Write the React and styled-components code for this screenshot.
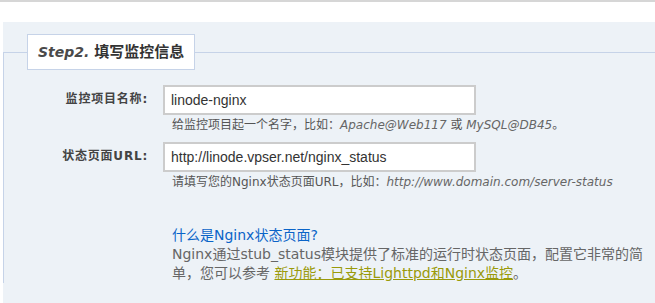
import React from "react";
import styled, { createGlobalStyle } from "styled-components";

const GlobalStyle = createGlobalStyle`
  html, body {
    margin: 0;
    padding: 0;
    background: #fff;
  }
  body {
    font-family: "DejaVu Sans", "Noto Sans CJK SC", sans-serif;
    font-size: 12px;
    color: #555;
  }
`;

const Page = styled.div`
  width: 655px;
  height: 303px;
  overflow: hidden;
  border-top: 2px solid #d6d6d6;
  padding-top: 20px;
  box-sizing: border-box;
`;

const Panel = styled.div`
  margin-left: 3px;
  padding-top: 12px;
  height: 400px;
  background-color: #edf2f7;
`;

const Fieldset = styled.fieldset`
  margin: 0;
  padding: 0 0 0 23px;
  min-width: 0;
  border: 1px solid #c6d3e8;
  border-right: none;
  border-bottom: none;
`;

const Legend = styled.legend`
  height: 36px;
  box-sizing: border-box;
  padding: 0 10px;
  border: 1px solid #c6d3e8;
  background-color: #fff;
  line-height: 34px;
  font-size: 14px;
  font-weight: bold;
  color: #333;
`;

const StepNo = styled.em`
  font-style: italic;
  color: #4a4a4a;
`;

const StepName = styled.span`
  font-size: 15px;
`;

const Form = styled.div`
  display: grid;
  grid-template-columns: 121px 1fr;
  column-gap: 15px;
  row-gap: 7px;
  padding-top: 15px;
`;

const Label = styled.label`
  height: 30px;
  line-height: 28px;
  text-align: right;
  font-size: 12px;
  font-weight: bold;
  letter-spacing: 0.8px;
  color: #444;
`;

const Field = styled.div`
  display: flex;
  flex-direction: column;
`;

const Input = styled.input`
  width: 313px;
  height: 30px;
  box-sizing: border-box;
  padding: 0 6px;
  border: 2px solid #cccccc;
  outline: none;
  background: #fff;
  font-family: "Liberation Sans", "Noto Sans CJK SC", sans-serif;
  font-size: 14px;
  color: #333;
`;

const Hint = styled.p`
  margin: 0;
  padding-left: 9px;
  line-height: 20px;
  font-size: 12px;
  color: #555;
  white-space: nowrap;
`;

const Sample = styled.i`
  color: #666;
`;

const Help = styled.div`
  width: 482px;
  margin: 34px 0 0 145px;
  font-size: 14px;
  line-height: 19px;
  color: #666;
`;

const HelpTitle = styled.a`
  display: block;
  color: #0a64c8;
  text-decoration: none;
`;

const HelpText = styled.p`
  margin: 0;
`;

const FeatureLink = styled.a`
  color: #9a9a0a;
  text-decoration: underline;
`;

const App = () => {
  return (
    <>
      <GlobalStyle />
      <Page>
        <Panel>
          <Fieldset>
            <Legend>
              <StepNo>Step2.</StepNo> <StepName>填写监控信息</StepName>
            </Legend>

            <Form>
              <Label>监控项目名称:</Label>
              <Field>
                <Input defaultValue="linode-nginx" />
                <Hint>
                  给监控项目起一个名字，比如：<Sample>Apache@Web117</Sample> 或{" "}
                  <Sample>MySQL@DB45</Sample>。
                </Hint>
              </Field>

              <Label>状态页面URL:</Label>
              <Field>
                <Input defaultValue="http://linode.vpser.net/nginx_status" />
                <Hint>
                  请填写您的Nginx状态页面URL，比如：
                  <Sample>http://www.domain.com/server-status</Sample>
                </Hint>
              </Field>
            </Form>

            <Help>
              <HelpTitle href="#">什么是Nginx状态页面?</HelpTitle>
              <HelpText>
                Nginx通过stub_status模块提供了标准的运行时状态页面，配置它非常的简单，您可以参考{" "}
                <FeatureLink href="#">新功能：已支持Lighttpd和Nginx监控</FeatureLink>。
              </HelpText>
            </Help>
          </Fieldset>
        </Panel>
      </Page>
    </>
  );
};

export default App;
